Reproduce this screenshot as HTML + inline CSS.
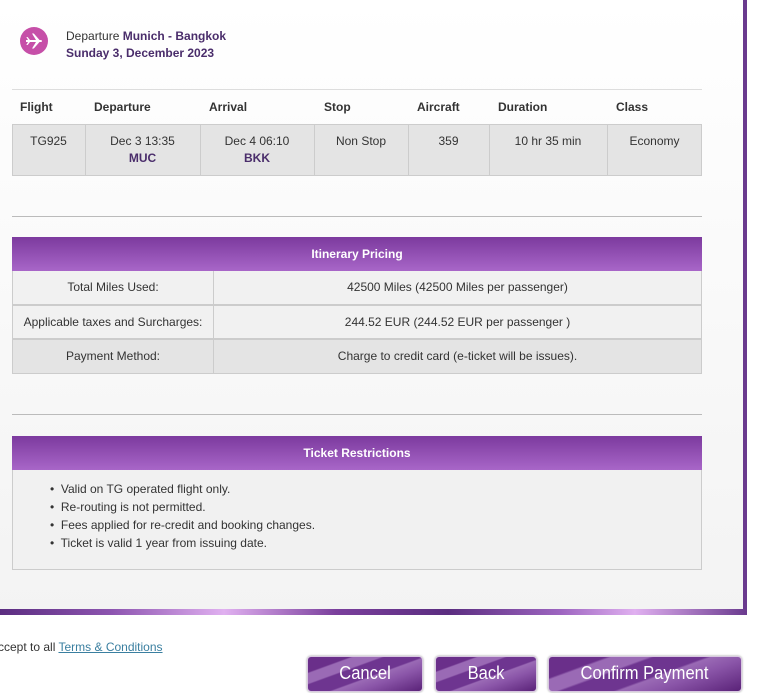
<!DOCTYPE html>
<html><head><meta charset="utf-8"><style>
*{margin:0;padding:0;box-sizing:border-box}
body{width:765px;height:693px;position:relative;overflow:hidden;background:#fff;font-family:"Liberation Sans",Arial,sans-serif;font-size:12px;color:#333}
.a{position:absolute}
.panel{left:0;top:0;width:747px;height:615px;background:linear-gradient(#fff,#f3f3f3);border-right:4px solid #6a3a8e}
.bb{left:0;top:609px;width:747px;height:6px;background:linear-gradient(90deg,#5b2d80,#8d55b0 15%,#e0b0f0 30%,#7a3f9c 45%,#5b2d80 60%,#9d65c0 75%,#e0b0f0 85%,#6a3a8e)}
.hr{left:12px;width:690px;height:1px;background:#bbb}
.c{position:absolute;text-align:center}
.b{font-weight:bold;color:#4a2d6b}
.ph{left:12px;width:690px;height:34px;background:linear-gradient(#7c3a9e,#a866c8);color:#fff;font-weight:bold;text-align:center;line-height:34px}
.row{left:12px;width:690px;height:34px;border:1px solid #ccc;border-top:none;background:#f1f1f1;line-height:33px;text-align:center}
.row span{position:absolute;top:0;height:33px}
.btn{top:656px;height:36px;border-radius:4px;border:1px solid #d8c8e0;color:#fff;font-size:18px;text-align:center;line-height:33px;background:linear-gradient(160deg,#6a2f8a 0%,#6a2f8a 20%,#9a6ab5 22%,#9a6ab5 35%,#6e3590 37%,#6e3590 55%,#9a6ab5 57%,#8a55a8 70%,#5a2278 100%);box-shadow:0 0 2px #999}
.btn span{display:inline-block;transform:scaleX(0.92)}
</style></head><body>
<div class="a panel"></div>
<div class="a bb"></div>
<div class="a" style="left:20px;top:27px;width:28px;height:28px;border-radius:50%;background:#c64fa8">
<svg width="28" height="28" viewBox="0 0 28 28" fill="#fff"><path d="M6 13 H20.5 a1.5 1 0 0 1 0 2 H6z"/><path d="M16 13 L12 6.5 H13.8 L19.5 13z"/><path d="M16 15 L12 21.5 H13.8 L19.5 15z"/><path d="M8 13 L6.3 10 H7.6 L10 13z"/><path d="M8 15 L6.3 18 H7.6 L10 15z"/></svg></div>
<div class="a" style="left:66px;top:29px">Departure <span class="b">Munich - Bangkok</span></div>
<div class="a b" style="left:66px;top:46px">Sunday 3, December 2023</div>
<div class="a hr" style="top:89px;background:#ddd"></div>
<div class="a" style="top:100px;left:0;width:765px;font-weight:bold;color:#333">
<span class="a" style="left:20px">Flight</span><span class="a" style="left:94px">Departure</span><span class="a" style="left:209px">Arrival</span><span class="a" style="left:324px">Stop</span><span class="a" style="left:417px">Aircraft</span><span class="a" style="left:498px">Duration</span><span class="a" style="left:616px">Class</span></div>
<div class="a" style="left:12px;top:124px;width:690px;height:52px;background:#e4e4e4;border:1px solid #ccc"></div>
<div class="a" style="top:124px;left:85px;width:1px;height:52px;background:#ccc"></div>
<div class="a" style="top:124px;left:200px;width:1px;height:52px;background:#ccc"></div>
<div class="a" style="top:124px;left:314px;width:1px;height:52px;background:#ccc"></div>
<div class="a" style="top:124px;left:408px;width:1px;height:52px;background:#ccc"></div>
<div class="a" style="top:124px;left:489px;width:1px;height:52px;background:#ccc"></div>
<div class="a" style="top:124px;left:607px;width:1px;height:52px;background:#ccc"></div>
<div class="c" style="top:134px;left:12px;width:73px">TG925</div>
<div class="c" style="top:133px;left:85px;width:115px;line-height:17px">Dec 3 13:35<br><span class="b">MUC</span></div>
<div class="c" style="top:133px;left:200px;width:114px;line-height:17px">Dec 4 06:10<br><span class="b">BKK</span></div>
<div class="c" style="top:134px;left:314px;width:94px">Non Stop</div>
<div class="c" style="top:134px;left:408px;width:81px">359</div>
<div class="c" style="top:134px;left:489px;width:118px">10 hr 35 min</div>
<div class="c" style="top:134px;left:607px;width:95px">Economy</div>
<div class="a hr" style="top:216px"></div>
<div class="a ph" style="top:237px">Itinerary Pricing</div>
<div class="a row" style="top:271px"><span style="left:0;width:200px">Total Miles Used:</span><span style="left:200px;width:488px;border-left:1px solid #ccc">42500 Miles (42500 Miles per passenger)</span></div>
<div class="a row" style="top:305px;border-top:1px solid #ccc;height:34px"><span style="left:0;width:200px">Applicable taxes and Surcharges:</span><span style="left:200px;width:488px;border-left:1px solid #ccc">244.52 EUR (244.52 EUR per passenger )</span></div>
<div class="a row" style="top:339px;border-top:1px solid #ccc;background:#e4e4e4;height:35px"><span style="left:0;width:200px">Payment Method:</span><span style="left:200px;width:488px;border-left:1px solid #ccc">Charge to credit card (e-ticket will be issues).</span></div>
<div class="a hr" style="top:414px"></div>
<div class="a ph" style="top:436px">Ticket Restrictions</div>
<div class="a" style="left:12px;top:470px;width:690px;height:100px;background:#f1f1f1;border:1px solid #ccc;border-top:none">
<ul style="position:absolute;left:37px;top:10px;line-height:18px;list-style:none">
<li>•&nbsp; Valid on TG operated flight only.</li><li>•&nbsp; Re-routing is not permitted.</li><li>•&nbsp; Fees applied for re-credit and booking changes.</li><li>•&nbsp; Ticket is valid 1 year from issuing date.</li></ul></div>
<div class="a" style="left:-2px;top:640px">ccept to all <span style="color:#3a7fa0;text-decoration:underline">Terms &amp; Conditions</span></div>
<div class="a btn" style="left:307px;width:116px"><span>Cancel</span></div>
<div class="a btn" style="left:435px;width:102px"><span>Back</span></div>
<div class="a btn" style="left:548px;width:194px"><span>Confirm Payment</span></div>
</body></html>
